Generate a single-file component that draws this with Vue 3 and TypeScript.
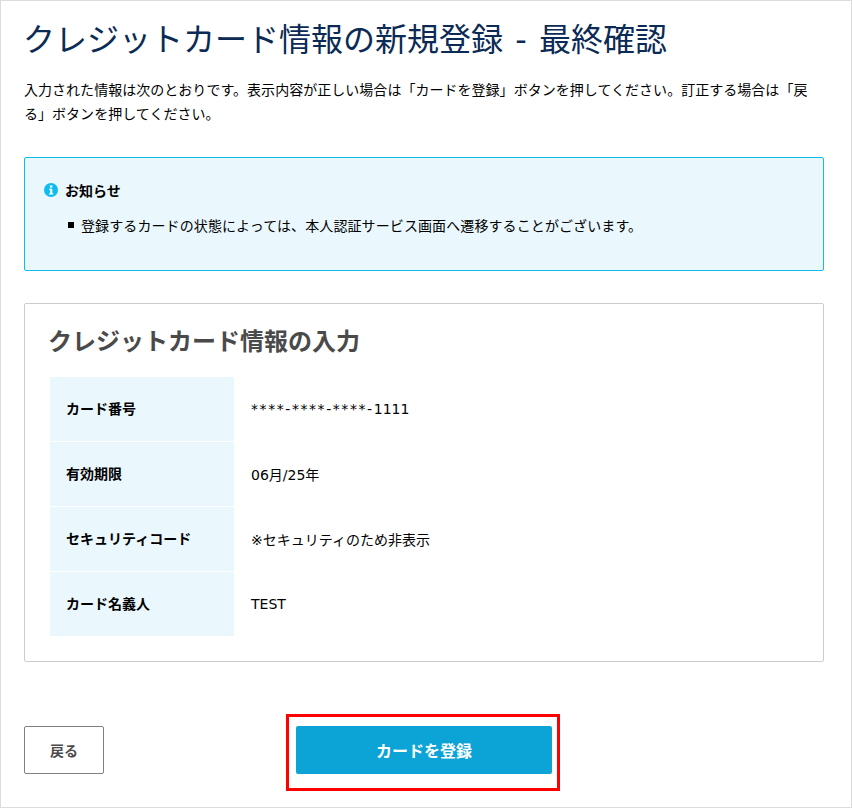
<script setup lang="ts">
const rows = [
  { label: "カード番号", mask: "****-****-****-", value: "1111" },
  { label: "有効期限", mask: "", value: "06月/25年" },
  { label: "セキュリティコード", mask: "", value: "※セキュリティのため非表示" },
  { label: "カード名義人", mask: "", value: "TEST" },
];
</script>

<template>
  <div class="page">
    <h1 class="title">クレジットカード情報の新規登録 - 最終確認</h1>
    <p class="lead">
      入力された情報は次のとおりです。表示内容が正しい場合は「カードを登録」ボタンを押してください。訂正する場合は「戻る」ボタンを押してください。
    </p>

    <section class="notice">
      <div class="notice-head">
        <svg class="info-icon" width="14" height="14" viewBox="0 0 14 14">
          <circle cx="7" cy="7" r="7" fill="#0dbcf0" />
          <rect x="5.9" y="2.4" width="2.4" height="2.2" fill="#fff" />
          <path d="M5.1 5.7h3.2v4.6h1v1.3H5.1v-1.3h1V7H5.1z" fill="#fff" />
        </svg>
        <span>お知らせ</span>
      </div>
      <ul class="notice-list">
        <li>登録するカードの状態によっては、本人認証サービス画面へ遷移することがございます。</li>
      </ul>
    </section>

    <section class="card">
      <h2 class="card-title">クレジットカード情報の入力</h2>
      <div class="rows">
        <div v-for="row in rows" :key="row.label" class="row">
          <div class="row-label">{{ row.label }}</div>
          <div class="row-value">
            <span v-if="row.mask" class="mask">{{ row.mask }}</span>{{ row.value }}
          </div>
        </div>
      </div>
    </section>

    <div class="actions">
      <button class="btn-back" type="button">戻る</button>
      <div class="highlight">
        <button class="btn-submit" type="button">カードを登録</button>
      </div>
    </div>
  </div>
</template>

<style scoped>
.page {
  box-sizing: border-box;
  width: 852px;
  height: 808px;
  padding: 0 27px 0 23px;
  border: 1px solid #dcdcdc;
  background: #fff;
  color: #000;
  font-family: "DejaVu Sans", "Noto Sans CJK JP", sans-serif;
  font-size: 14px;
  overflow: hidden;
}

.title {
  margin: 17px 0 0 -1px;
  color: #0b2a55;
  font-family: "DejaVu Sans", "Noto Sans CJK JP", sans-serif;
  font-size: 32px;
  font-weight: 400;
  line-height: 44px;
  word-spacing: 2px;
}

.lead {
  margin: 15px 0 0;
  font-family: "Noto Sans CJK JP", sans-serif;
  line-height: 24px;
  letter-spacing: 0.03px;
}

.notice {
  box-sizing: border-box;
  height: 114px;
  margin-top: 32px;
  padding: 22px 19px 0;
  border: 1px solid #0dbcf0;
  border-radius: 2px;
  background: #eaf8fd;
  font-family: "Noto Sans CJK JP", sans-serif;
}

.notice-head {
  display: flex;
  align-items: center;
  gap: 7px;
  height: 20px;
  font-weight: 700;
}

.info-icon {
  flex: none;
}

.notice-list {
  margin: 15px 0 0;
  padding: 0 0 0 24px;
  list-style: none;
}

.notice-list li {
  display: flex;
  align-items: center;
  line-height: 20px;
  letter-spacing: 0.1px;
}

.notice-list li::before {
  content: "";
  flex: none;
  width: 6px;
  height: 6px;
  margin-right: 7px;
  background: #000;
}

.card {
  box-sizing: border-box;
  height: 359px;
  margin-top: 32px;
  padding: 18px 25px 0;
  border: 1px solid #ccc;
  border-radius: 2px;
}

.card-title {
  margin: 0 0 0 -2px;
  color: #4a4a4a;
  font-family: "Noto Sans CJK JP", sans-serif;
  font-size: 24px;
  font-weight: 700;
  line-height: 36px;
}

.rows {
  margin-top: 19px;
}

.row {
  display: flex;
  height: 64px;
  margin-bottom: 1px;
}

.row-label {
  display: flex;
  align-items: center;
  box-sizing: border-box;
  width: 184px;
  padding: 0 0 2px 16px;
  background: #eaf8fd;
  font-family: "Noto Sans CJK JP", sans-serif;
  font-weight: 700;
}

.row-value {
  align-self: center;
  padding: 0 0 1px 17px;
  white-space: pre;
}

.mask {
  letter-spacing: 1.57px;
}

.actions {
  display: flex;
  align-items: flex-start;
  margin-top: 52px;
}

.btn-back {
  box-sizing: border-box;
  width: 80px;
  height: 48px;
  margin-top: 12px;
  border: 1px solid #808080;
  border-radius: 2px;
  background: #fff;
  color: #4a4a4a;
  font-family: "Noto Sans CJK JP", sans-serif;
  font-size: 14px;
  font-weight: 700;
}

.highlight {
  box-sizing: border-box;
  width: 274px;
  height: 77px;
  margin-left: 182px;
  padding: 9px 5px 14px 7px;
  border: 3px solid #f00;
}

.btn-submit {
  display: block;
  width: 256px;
  height: 48px;
  border: 0;
  border-radius: 2px;
  background: #0ca3d6;
  color: #fff;
  font-family: "Noto Sans CJK JP", sans-serif;
  font-size: 16px;
  font-weight: 700;
}
</style>
